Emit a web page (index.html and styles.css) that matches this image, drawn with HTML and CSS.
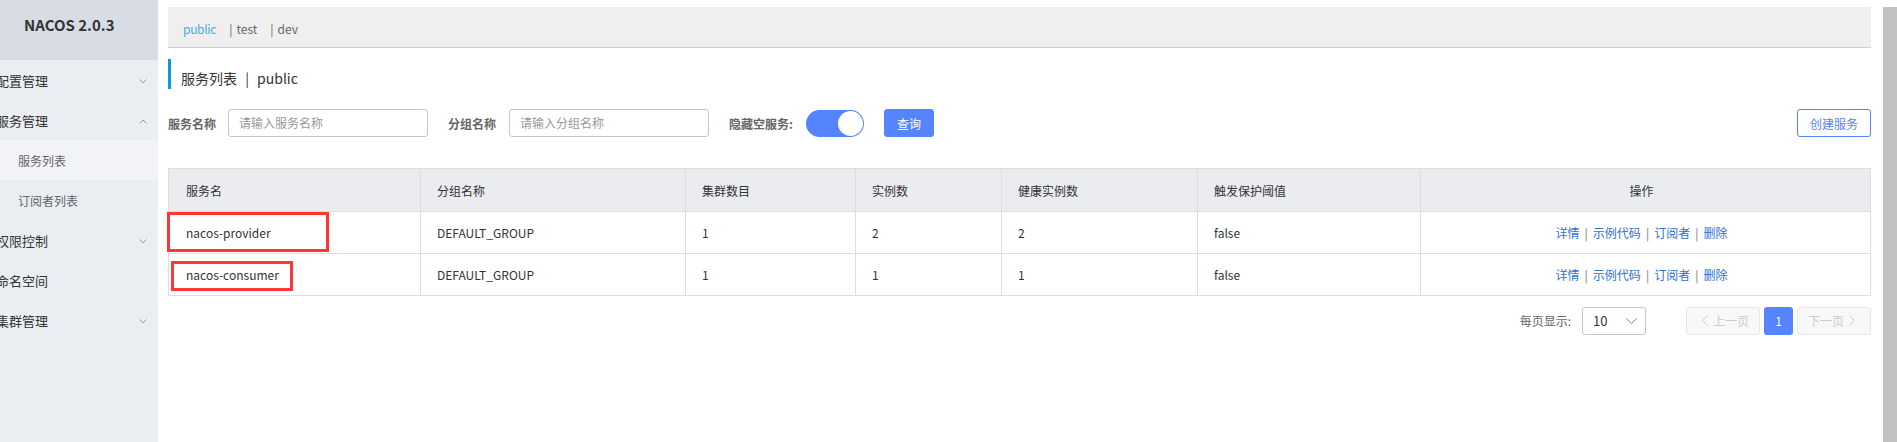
FILE: index.html
```html
<!DOCTYPE html>
<html lang="zh-CN">
<head>
<meta charset="utf-8">
<title>Nacos</title>
<link rel="stylesheet" href="styles.css">
</head>
<body>
<aside class="sidebar">
  <div class="brand">NACOS 2.0.3</div>
  <ul class="menu">
    <li class="item"><span class="label">配置管理</span><svg class="chev" viewBox="0 0 8 5"><path d="M0.5 0.5L4 4L7.5 0.5"/></svg></li>
    <li class="item"><span class="label">服务管理</span><svg class="chev" viewBox="0 0 8 5"><path d="M0.5 4.5L4 1L7.5 4.5"/></svg></li>
    <li class="sub active">服务列表</li>
    <li class="sub">订阅者列表</li>
    <li class="item"><span class="label">权限控制</span><svg class="chev" viewBox="0 0 8 5"><path d="M0.5 0.5L4 4L7.5 0.5"/></svg></li>
    <li class="item"><span class="label">命名空间</span></li>
    <li class="item"><span class="label">集群管理</span><svg class="chev" viewBox="0 0 8 5"><path d="M0.5 0.5L4 4L7.5 0.5"/></svg></li>
  </ul>
</aside>
<main class="main">
  <div class="ns-bar">
    <span class="ns current">public</span>
    <span class="ns"><b class="pipe">|</b>test</span>
    <span class="ns"><b class="pipe">|</b>dev</span>
  </div>
  <h1 class="title">服务列表 <span class="sep">|</span> public</h1>
  <div class="search">
    <label class="lbl">服务名称</label>
    <div class="input">请输入服务名称</div>
    <label class="lbl lbl2">分组名称</label>
    <div class="input">请输入分组名称</div>
    <label class="lbl lbl2">隐藏空服务:</label>
    <div class="switch"><span class="knob"></span></div>
    <button class="btn primary">查询</button>
    <button class="btn outline">创建服务</button>
  </div>
  <div class="table-wrap">
    <table class="grid">
      <colgroup>
        <col style="width:252px"><col style="width:265px"><col style="width:170px"><col style="width:146px"><col style="width:196px"><col style="width:223px"><col>
      </colgroup>
      <thead>
        <tr><th>服务名</th><th>分组名称</th><th>集群数目</th><th>实例数</th><th>健康实例数</th><th>触发保护阈值</th><th class="ops">操作</th></tr>
      </thead>
      <tbody>
        <tr><td>nacos-provider</td><td>DEFAULT_GROUP</td><td>1</td><td>2</td><td>2</td><td>false</td><td class="ops"><a>详情</a><i>|</i><a>示例代码</a><i>|</i><a>订阅者</a><i>|</i><a>删除</a></td></tr>
        <tr><td>nacos-consumer</td><td>DEFAULT_GROUP</td><td>1</td><td>1</td><td>1</td><td>false</td><td class="ops"><a>详情</a><i>|</i><a>示例代码</a><i>|</i><a>订阅者</a><i>|</i><a>删除</a></td></tr>
      </tbody>
    </table>
    <div class="mark mark1"></div>
    <div class="mark mark2"></div>
  </div>
  <div class="pager">
    <span class="ps-label">每页显示:</span>
    <div class="select"><span>10</span><svg class="sel-chev" viewBox="0 0 11 6"><path d="M0.5 0.5L5.5 5.5L10.5 0.5"/></svg></div>
    <div class="pbtn disabled"><svg class="pchev" viewBox="0 0 6 11"><path d="M5.5 0.5L0.5 5.5L5.5 10.5"/></svg>上一页</div>
    <div class="pbtn cur">1</div>
    <div class="pbtn disabled">下一页<svg class="pchev" viewBox="0 0 6 11"><path d="M0.5 0.5L5.5 5.5L0.5 10.5"/></svg></div>
  </div>
</main>
<div class="scrollbar"></div>
</body>
</html>
```
FILE: styles.css
```css
* { box-sizing: border-box; }
html, body { margin: 0; padding: 0; }
body {
  display: flex;
  width: 1897px;
  height: 442px;
  overflow: hidden;
  background: #fff;
  font-family: "Noto Sans CJK SC", "Noto Sans", sans-serif;
  font-size: 12px;
  color: #333;
}
.sidebar {
  width: 158px;
  flex: 0 0 158px;
  background: #eaedf1;
  overflow: hidden;
}
.brand {
  height: 60px;
  background: #d8dde5;
  padding-left: 24px;
  padding-top: 14px;
  line-height: 22px;
  font-size: 15px;
  font-weight: bold;
  color: #333;
}
.menu { list-style: none; margin: 0; padding: 0; }
.menu li {
  height: 40px;
  line-height: 40px;
  padding-top: 2px;
  white-space: nowrap;
  display: flex;
  align-items: center;
}
.item { font-size: 13px; color: #333; justify-content: space-between; padding-right: 11px; }
.item .label { margin-left: -4px; }
.chev { width: 8px; height: 5px; fill: none; stroke: #999; stroke-width: 1; }
.sub { font-size: 12px; color: #666; padding-left: 18px; }
.sub.active { background: #f2f3f7; }

.main {
  flex: 1;
  padding: 7px 26px 0 10px;
  min-width: 0;
}
.ns-bar {
  height: 41px;
  background: #efefef;
  border-bottom: 1px solid #cfcfcf;
  padding-left: 15px;
  padding-top: 12px;
  line-height: 20px;
  font-size: 12px;
  color: #666;
  display: flex;
}
.ns { margin-right: 13px; }
.ns.current { color: #3ab0e2; letter-spacing: -0.3px; }
.pipe { font-weight: normal; margin-right: 4px; }

.title {
  margin: 11px 0 0 0;
  height: 30px;
  border-left: 3px solid #0c9ad6;
  padding-left: 10px;
  padding-top: 8px;
  line-height: 22px;
  font-size: 14px;
  font-weight: normal;
  color: #333;
}
.title .sep { margin: 0 5px; }

.search {
  margin-top: 20px;
  height: 28px;
  display: flex;
  align-items: center;
}
.lbl { font-weight: bold; color: #666; font-size: 12px; margin-right: 12px; padding-top: 1px; }
.lbl2 { margin-left: 20px; margin-right: 13px; }
.input {
  width: 200px;
  height: 28px;
  border: 1px solid #c4c6cf;
  border-radius: 3px;
  padding-left: 10px;
  line-height: 26px;
  color: #999;
  font-size: 12px;
}
.switch {
  width: 58px;
  height: 27px;
  border-radius: 14px;
  background: #5584ff;
  display: flex;
  align-items: center;
  justify-content: flex-end;
  padding-right: 1px;
}
.knob {
  width: 25px;
  height: 25px;
  border-radius: 50%;
  background: #fff;
}
.btn {
  height: 28px;
  border-radius: 3px;
  font-family: inherit;
  font-size: 12px;
  padding: 0;
}
.primary {
  margin-left: 20px;
  width: 50px;
  background: #5584ff;
  border: 1px solid #5584ff;
  color: #fff;
}
.outline {
  margin-left: auto;
  width: 74px;
  background: #fff;
  border: 1px solid #5584ff;
  color: #5584ff;
}

.table-wrap { position: relative; margin-top: 31px; }
.grid {
  width: 100%;
  border-collapse: collapse;
  table-layout: fixed;
  font-size: 12px;
}
.grid th, .grid td {
  border: 1px solid #dcdee3;
  text-align: left;
  padding: 0 0 0 16px;
  font-weight: normal;
  color: #333;
}
.grid th { background: #ebecf0; height: 43px; padding-top: 1px; }
.grid td { height: 42px; padding-bottom: 1px; }
.grid th:first-child, .grid td:first-child { padding-left: 17px; }
.grid .ops { text-align: center; padding-left: 0; padding-right: 8px; }
.ops a { color: #2f6fd6; }
.ops i { font-style: normal; color: #777; margin: 0 5px; }
.mark { position: absolute; border: 3px solid #ff3636; }
.mark1 { left: -1px; top: 44px; width: 162px; height: 40px; }
.mark2 { left: 3px; top: 93px; width: 122px; height: 30px; }

.pager {
  margin-top: 11px;
  display: flex;
  justify-content: flex-end;
  align-items: center;
  height: 27px;
}
.ps-label { color: #666; margin-right: 11px; }
.select {
  width: 64px;
  height: 28px;
  border: 1px solid #c4c6cf;
  border-radius: 3px;
  display: flex;
  align-items: center;
  justify-content: space-between;
  padding: 0 8px 0 10px;
  font-size: 13px;
  color: #333;
  margin-right: 40px;
}
.sel-chev { width: 11px; height: 6px; fill: none; stroke: #888; stroke-width: 1; }
.pbtn {
  height: 28px;
  border-radius: 3px;
  display: flex;
  align-items: center;
  justify-content: center;
  font-size: 12px;
}
.pbtn.disabled {
  width: 74px;
  background: #f7f8fa;
  border: 1px solid #e6e7eb;
  color: #ccc;
}
.pbtn.cur {
  width: 29px;
  margin: 0 4px;
  background: #5584ff;
  color: #fff;
}
.pchev { width: 6px; height: 11px; fill: none; stroke: #ccc; stroke-width: 1; margin: 0 5px; }

.scrollbar {
  position: fixed;
  right: 0;
  top: 7px;
  bottom: 0;
  width: 14px;
  background: #c1c1c1;
}
```
